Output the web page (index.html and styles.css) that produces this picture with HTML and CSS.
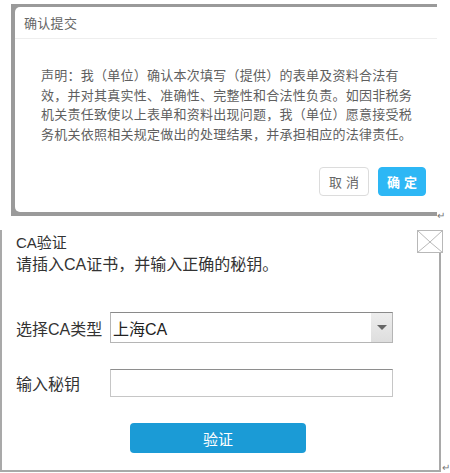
FILE: index.html
```html
<!DOCTYPE html>
<html lang="zh-CN">
<head>
<meta charset="utf-8">
<title>确认提交 / CA验证</title>
<link rel="stylesheet" href="styles.css">
</head>
<body>
<div class="page">
  <div class="top-row">
    <div class="overlay">
      <div class="dialog">
        <div class="dialog-header">确认提交</div>
        <div class="dialog-body">声明：我（单位）确认本次填写（提供）的表单及资料合法有效，并对其真实性、准确性、完整性和合法性负责。如因非税务机关责任致使以上表单和资料出现问题，我（单位）愿意接受税务机关依照相关规定做出的处理结果，并承担相应的法律责任。</div>
        <div class="dialog-footer">
          <button class="btn btn-cancel">取消</button>
          <button class="btn btn-ok">确定</button>
        </div>
      </div>
    </div>
    <span class="return-mark">↵</span>
  </div>

  <div class="ca-row">
    <div class="ca">
      <svg class="ca-close" width="26" height="23" viewBox="0 0 26 23">
        <rect x="0.5" y="0.5" width="25" height="22" fill="#fff" stroke="#b8b8b8"/>
        <path d="M0.5 0.5 L13 12 L25.5 0.5 M0.5 22.5 L13 12 L25.5 22.5" fill="none" stroke="#b8b8b8"/>
      </svg>
      <div class="ca-title">CA验证</div>
      <div class="ca-desc">请插入CA证书，并输入正确的秘钥。</div>
      <div class="form-row row-select">
        <span class="form-label">选择CA类型</span>
        <div class="select">
          <span class="select-value">上海CA</span>
          <span class="select-arrow"><span class="triangle"></span></span>
        </div>
      </div>
      <div class="form-row row-input">
        <span class="form-label">输入秘钥</span>
        <div class="text-input"></div>
      </div>
      <button class="btn-verify">验证</button>
    </div>
    <span class="return-mark small">↵</span>
  </div>
</div>
</body>
</html>
```

FILE: styles.css
```css
html, body {
  margin: 0;
  padding: 0;
  background: #fff;
}

body {
  font-family: "Liberation Sans", "Noto Sans CJK SC", sans-serif;
}

.page {
  padding-top: 4px;
}

.top-row {
  display: flex;
  align-items: flex-end;
  padding-left: 11px;
}

.overlay {
  width: 426px;
  height: 212px;
  box-sizing: border-box;
  background: #9a9a9a;
  padding: 3px 0 4px 4px;
}

.dialog {
  background: #fff;
  height: 100%;
  border-radius: 5px 0 0 5px;
  display: flex;
  flex-direction: column;
}

.dialog-header {
  height: 32px;
  box-sizing: border-box;
  border-bottom: 1px solid #eeeeee;
  padding-left: 9px;
  font-size: 13px;
  line-height: 33px;
  color: #666;
  letter-spacing: 0.3px;
}

.dialog-body {
  padding: 27px 0 0 26px;
  width: 372px;
  font-size: 13px;
  letter-spacing: 0.25px;
  line-height: 19.5px;
  color: #5f5f5f;
  line-break: strict;
}

.dialog-footer {
  display: flex;
  justify-content: flex-end;
  gap: 9px;
  padding: 0 11px 0 0;
  margin-top: 23px;
}

.btn {
  height: 29px;
  box-sizing: border-box;
  border-radius: 4px;
  font-family: "Noto Sans CJK SC", sans-serif;
  font-size: 13px;
  letter-spacing: 4px;
  padding: 0 0 0 4px;
  cursor: pointer;
}

.btn-cancel {
  width: 50px;
  background: #fff;
  border: 1px solid #dcdcdc;
  color: #666;
}

.btn-ok {
  width: 48px;
  background: #2db7f5;
  border: 1px solid #2db7f5;
  color: #fff;
  font-weight: bold;
}

.return-mark {
  font-size: 10px;
  color: #777;
  line-height: 8px;
  margin-bottom: -4px;
}

.ca-row {
  display: flex;
  align-items: flex-end;
  margin-top: 14px;
}

.ca {
  position: relative;
  width: 444px;
  box-sizing: border-box;
  border-left: 2px solid #a9a9a9;
  border-right: 2px solid #a9a9a9;
  border-bottom: 2px solid #a9a9a9;
  padding: 3px 0 17px 14px;
  color: #333;
  font-size: 16px;
}

.ca-close {
  position: absolute;
  top: 0;
  right: -4px;
  display: block;
}

.ca-title {
  line-height: 20px;
  font-size: 15px;
}

.ca-desc {
  margin-top: 2px;
  line-height: 20px;
}

.form-row {
  display: flex;
  align-items: center;
}

.row-select {
  margin-top: 37px;
}

.row-input {
  margin-top: 26px;
}

.form-label {
  width: 94px;
}

.select {
  width: 283px;
  height: 31px;
  box-sizing: border-box;
  border: 1px solid #b5b5b5;
  border-top-color: #8a8a8a;
  display: flex;
  align-items: center;
}

.select-value {
  flex: 1;
  padding-left: 2px;
  color: #222;
}

.select-arrow {
  width: 21px;
  height: 100%;
  background: linear-gradient(#ededed, #dedede);
  display: flex;
  align-items: center;
  justify-content: center;
}

.triangle {
  width: 0;
  height: 0;
  border-left: 5px solid transparent;
  border-right: 5px solid transparent;
  border-top: 5px solid #666;
}

.text-input {
  width: 283px;
  height: 28px;
  box-sizing: border-box;
  border: 1px solid #c6c6c6;
  border-top-color: #8e8e8e;
  background: #fff;
}

.btn-verify {
  display: block;
  margin: 26px 0 0 114px;
  width: 176px;
  height: 30px;
  border: none;
  border-radius: 4px;
  background: #1b9bd6;
  color: #fff;
  font-family: "Noto Sans CJK SC", sans-serif;
  font-size: 15px;
}

.return-mark.small {
  margin-left: 1px;
  margin-bottom: 0;
}
```
